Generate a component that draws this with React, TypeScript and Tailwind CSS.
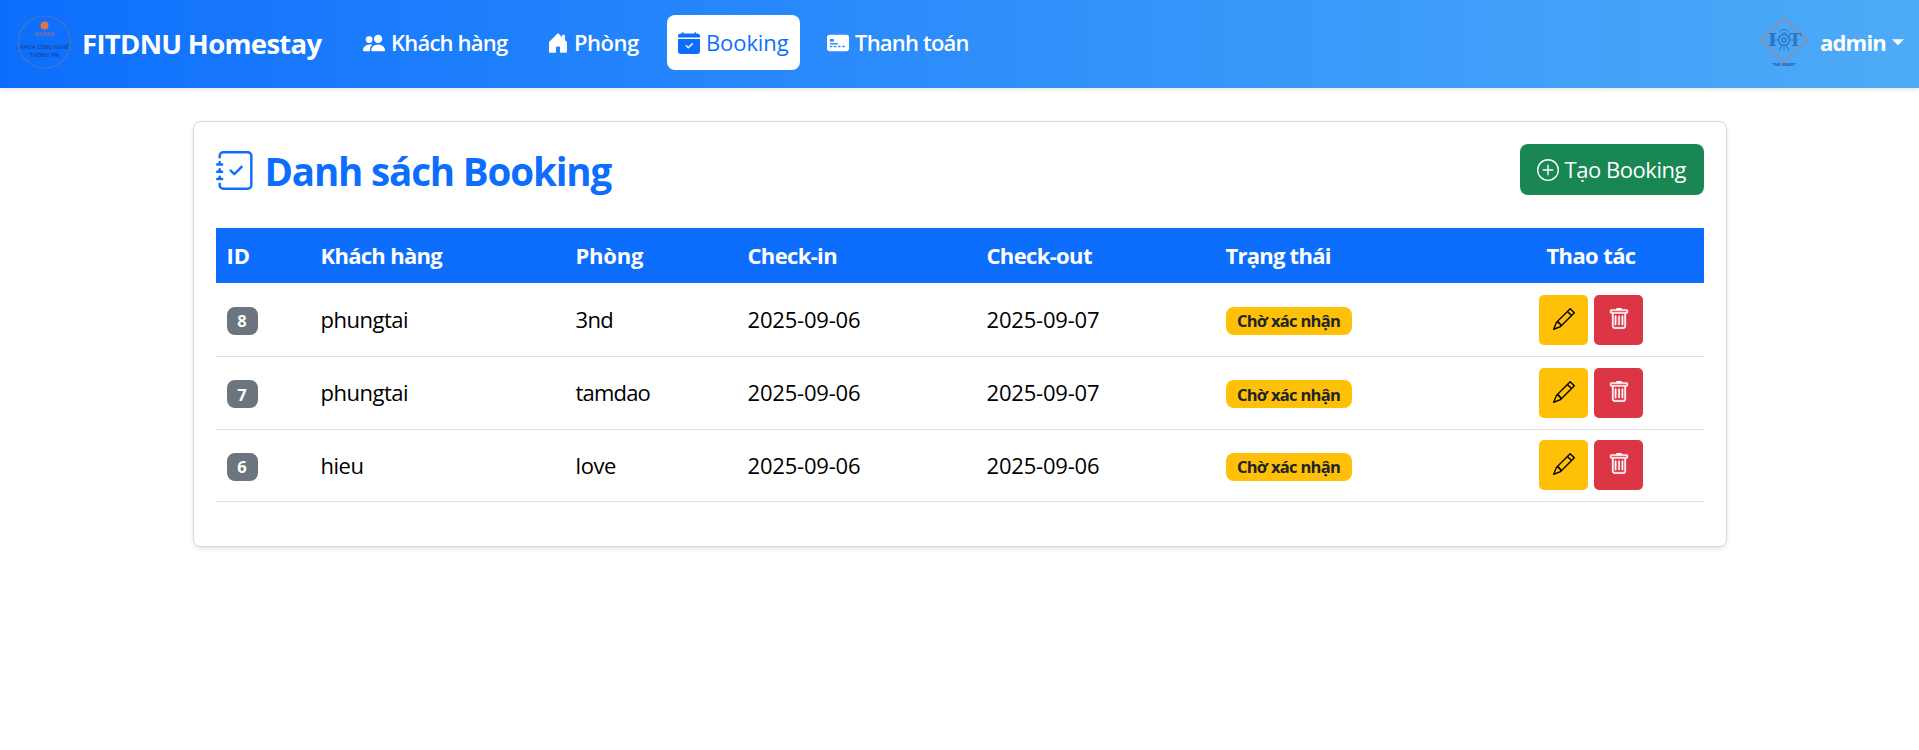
import type { IconType } from "react-icons";
import {
  BsPeopleFill,
  BsHouseDoorFill,
  BsCalendarCheckFill,
  BsCreditCard2FrontFill,
  BsJournalCheck,
  BsPlusCircle,
  BsPencil,
  BsTrash,
} from "react-icons/bs";

interface Booking {
  id: number;
  customer: string;
  customerClass: string;
  room: string;
  roomClass: string;
  checkIn: string;
  checkOut: string;
  status: string;
}

const bookings: Booking[] = [
  { id: 8, customer: "phungtai", customerClass: "tracking-[-0.5px]", room: "3nd", roomClass: "tracking-[-0.6px]", checkIn: "2025-09-06", checkOut: "2025-09-07", status: "Chờ xác nhận" },
  { id: 7, customer: "phungtai", customerClass: "tracking-[-0.5px]", room: "tamdao", roomClass: "tracking-[-0.8px]", checkIn: "2025-09-06", checkOut: "2025-09-07", status: "Chờ xác nhận" },
  { id: 6, customer: "hieu", customerClass: "tracking-[-0.5px]", room: "love", roomClass: "tracking-[-0.4px]", checkIn: "2025-09-06", checkOut: "2025-09-06", status: "Chờ xác nhận" },
];

const columns = [
  { label: "ID", className: "w-[94px] px-[11px]" },
  { label: "Khách hàng", className: "w-[255px] px-[11px] tracking-[-0.7px]" },
  { label: "Phòng", className: "w-[172px] px-[11px] tracking-[-0.2px]" },
  { label: "Check-in", className: "w-[239px] px-[11px] tracking-[-0.65px]" },
  { label: "Check-out", className: "w-[239px] px-[11px] tracking-[-0.65px]" },
  { label: "Trạng thái", className: "w-[264px] px-[11px] tracking-[-0.75px]" },
  { label: "Thao tác", className: "px-[11px] text-center tracking-[-0.6px]" },
];

function FacultyLogo() {
  return (
    <svg className="mt-px ml-[17px] h-[56px] w-[56px]" viewBox="0 0 56 56" fontFamily="Liberation Sans, sans-serif">
      <circle cx="27.5" cy="27" r="26" fill="none" stroke="#4778bd" strokeWidth="1.2" />
      <circle cx="27.5" cy="10.5" r="3.8" fill="#f0743a" />
      <path d="M27.5 5.5v10M22.5 10.5h10M24 7l7 7M31 7l-7 7" stroke="#d0745c" strokeWidth="0.8" />
      <text x="27.5" y="20.6" fontSize="4.6" fontWeight="700" fill="#846f98" textAnchor="middle" textLength="19">ĐẠI NAM</text>
      <text x="27.5" y="34" fontSize="5.6" fontWeight="700" fill="#154aa6" textAnchor="middle" textLength="49" lengthAdjust="spacingAndGlyphs">KHOA CÔNG NGHỆ</text>
      <text x="27.5" y="41.5" fontSize="5.6" fontWeight="700" fill="#154aa6" textAnchor="middle" textLength="30" lengthAdjust="spacingAndGlyphs">THÔNG TIN</text>
    </svg>
  );
}

function IotLogo() {
  return (
    <svg className="mt-[-2px] h-[56px] w-[52px]" viewBox="0 0 52 56" fill="none">
      <path d="M26 4.5 49.5 26 26 47.5 2.5 26Z" stroke="#8892aa" strokeWidth="2" />
      <text x="14.5" y="32" fontFamily="Liberation Serif, serif" fontSize="19" fill="#2b73bd" textAnchor="middle" textLength="9" lengthAdjust="spacingAndGlyphs">I</text>
      <text x="37" y="32" fontFamily="Liberation Serif, serif" fontSize="19" fill="#2b73bd" textAnchor="middle">T</text>
      <g stroke="#2f78c2">
        <circle cx="26" cy="26" r="5.5" strokeWidth="1.5" />
        <circle cx="26" cy="26" r="2" strokeWidth="1.5" />
        <path d="M21.5 17.5q4.5-4 9 0M23.5 19.5q2.5-2 5 0M24 31.5l-3 5M28 31.5l3 5M26 31.5v4M12 26h8M32 26h8" />
      </g>
      <text x="26" y="52" fontFamily="Liberation Sans, sans-serif" fontSize="4" fontWeight="700" fill="#1f5b9e" textAnchor="middle" textLength="23">THE SMART</text>
    </svg>
  );
}

function NavItem({ icon: Icon, label, active, className, labelClass }: { icon: IconType; label: string; active?: boolean; className: string; labelClass: string }) {
  return (
    <a
      className={`flex h-[55px] items-center rounded-lg text-[22px] ${active ? "bg-white font-medium text-[#0d6efd]" : "font-semibold text-white"} ${className}`}
    >
      <Icon className="h-[22px] w-[22px] shrink-0" />
      <span className={`whitespace-nowrap ${labelClass}`}>{label}</span>
    </a>
  );
}

export default function App() {
  return (
    <div className="min-h-[750px] bg-white font-['Open_Sans','Noto_Sans',sans-serif] text-[22px] leading-[33px] text-black">
      <header className="flex h-[88px] items-center bg-linear-to-r from-[#0d6efd] to-[#4dabf7] pb-[3px] shadow-[0_2px_4px_rgba(0,0,0,0.09)]">
        <FacultyLogo />
        <span className="mt-[2px] ml-[9px] w-[267px] text-[27.5px] font-bold tracking-[-0.7px] whitespace-nowrap text-white">
          FITDNU Homestay
        </span>
        <nav className="flex items-center">
          <NavItem icon={BsPeopleFill} label="Khách hàng" className="ml-[14px] w-[184px]" labelClass="ml-[6px] tracking-[-0.8px]" />
          <NavItem icon={BsHouseDoorFill} label="Phòng" className="w-[120px]" labelClass="ml-[5px] tracking-[-0.5px]" />
          <NavItem icon={BsCalendarCheckFill} label="Booking" active className="w-[133px] pl-[11px]" labelClass="ml-[6px] tracking-[-0.1px]" />
          <NavItem icon={BsCreditCard2FrontFill} label="Thanh toán" className="pl-[27px]" labelClass="ml-[6px] tracking-[-0.8px]" />
        </nav>
        <button className="mr-[15px] ml-auto flex items-center text-[22px] font-bold text-white">
          <IotLogo />
          <span className="ml-[10px] tracking-[-0.8px]">admin</span>
          <svg className="ml-[6px] h-[7px] w-[12px]" viewBox="0 0 13 7" fill="currentColor">
            <path d="M0 0h13L6.5 6.5Z" />
          </svg>
        </button>
      </header>

      <main className="mx-auto mt-[33px] h-[426px] w-[1534px] rounded-lg border border-[#d5d7da] px-[22px] pt-[22px] shadow-[0_2px_5px_rgba(0,0,0,0.1)]">
        <div className="flex h-[51px] items-center justify-between">
          <h1 className="flex items-center text-[38.5px] leading-[46px] font-bold tracking-[-1.15px] text-[#0d6efd]">
            <BsJournalCheck className="mt-px mr-[10px] h-[39px] w-[39px]" />
            <span className="mt-[2px]">Danh sách Booking</span>
          </h1>
          <button className="flex h-[51px] w-[184px] items-center rounded-lg bg-[#198754] pl-[17px] text-white">
            <BsPlusCircle className="h-[22px] w-[22px] shrink-0" />
            <span className="ml-[6px] tracking-[-0.45px] whitespace-nowrap">Tạo Booking</span>
          </button>
        </div>

        <table className="mt-[33px] w-[1488px] table-fixed border-collapse">
          <thead>
            <tr className="h-[55px] bg-[#0d6efd] text-left text-white">
              {columns.map((column) => (
                <th key={column.label} className={`py-0 font-bold ${column.className}`}>{column.label}</th>
              ))}
            </tr>
          </thead>
          <tbody>
            {bookings.map((booking) => (
              <tr key={booking.id} className="h-[72.5px] border-b border-[#dee2e6] first:h-[73.5px]">
                <td className="px-[11px] py-0">
                  <span className="mt-[3px] flex h-[28px] w-[31px] items-center justify-center rounded-lg bg-[#6c757d] text-[16.5px] leading-none font-bold text-white">
                    <span className="mt-px">{booking.id}</span>
                  </span>
                </td>
                <td className={`px-[11px] ${booking.customerClass}`}>{booking.customer}</td>
                <td className={`px-[11px] ${booking.roomClass}`}>{booking.room}</td>
                <td className="px-[11px] tracking-[-0.2px]">{booking.checkIn}</td>
                <td className="px-[11px] tracking-[-0.2px]">{booking.checkOut}</td>
                <td className="px-[11px]">
                  <span className="mt-[3px] flex h-[28px] w-[126px] items-center justify-center rounded-lg bg-[#ffc107] text-[16.5px] leading-none font-bold tracking-[-0.7px] whitespace-nowrap text-[#212529]">
                    <span className="mt-px">{booking.status}</span>
                  </span>
                </td>
                <td>
                  <div className="flex justify-center gap-[6px]">
                    <button className="flex h-[50px] w-[49px] items-center justify-center rounded-[5px] bg-[#ffc107] pb-[2px] text-black">
                      <BsPencil className="h-[22px] w-[22px]" />
                    </button>
                    <button className="flex h-[50px] w-[49px] items-center justify-center rounded-[5px] bg-[#dc3545] pb-[2px] text-white">
                      <BsTrash className="h-[22px] w-[22px]" strokeWidth={0.3} />
                    </button>
                  </div>
                </td>
              </tr>
            ))}
          </tbody>
        </table>
      </main>
    </div>
  );
}
